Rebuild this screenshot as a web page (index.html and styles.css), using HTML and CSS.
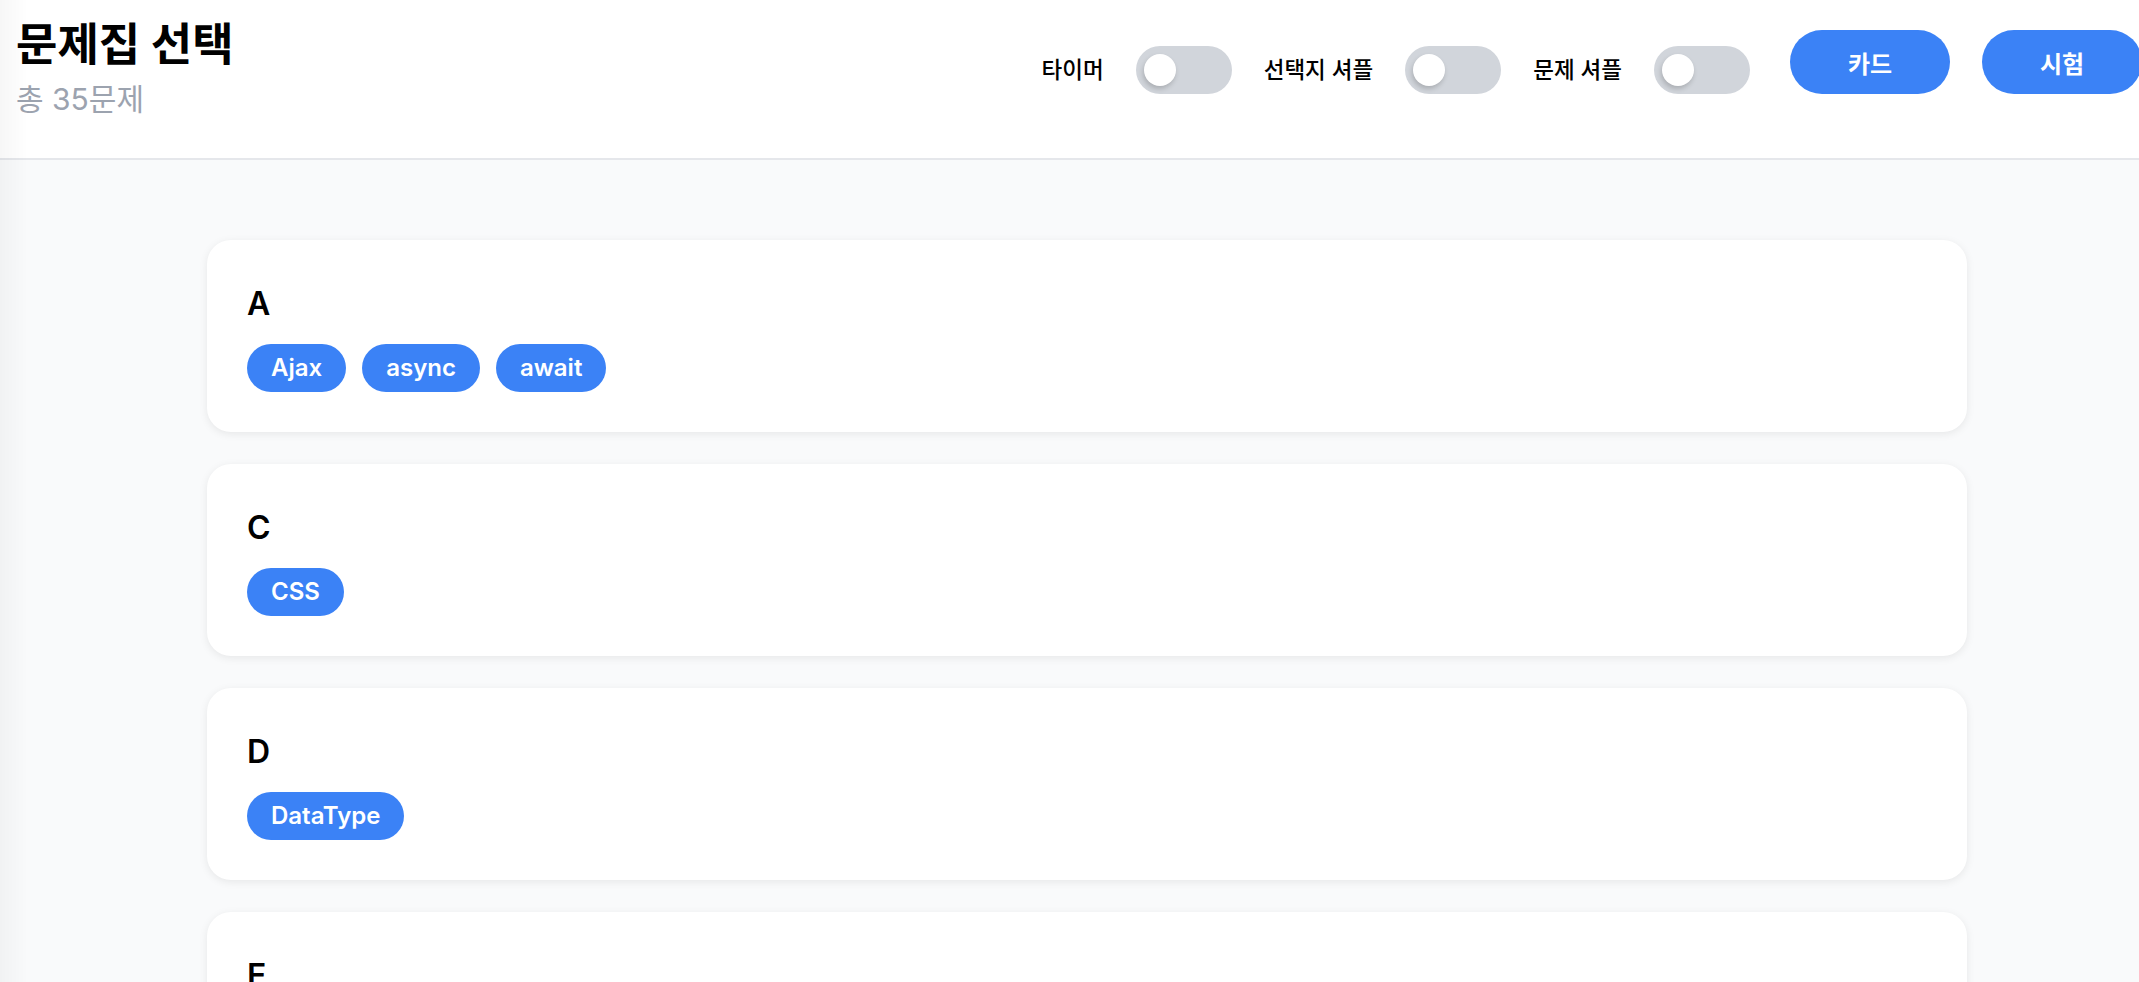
FILE: index.html
```html
<!DOCTYPE html>
<html lang="ko">
<head>
<meta charset="utf-8">
<title>문제집 선택</title>
<link rel="stylesheet" href="styles.css">
</head>
<body>
<div class="page">
  <header class="topbar">
    <div class="title-block">
      <h1 class="title">문제집 선택</h1>
      <p class="subtitle">총 35문제</p>
    </div>
    <div class="controls">
      <div class="toggle-group">
        <span class="toggle-label">타이머</span>
        <span class="toggle"><span class="knob"></span></span>
      </div>
      <div class="toggle-group">
        <span class="toggle-label">선택지 셔플</span>
        <span class="toggle"><span class="knob"></span></span>
      </div>
      <div class="toggle-group">
        <span class="toggle-label">문제 셔플</span>
        <span class="toggle"><span class="knob"></span></span>
      </div>
      <div class="buttons">
        <button class="btn">카드</button>
        <button class="btn">시험</button>
      </div>
    </div>
  </header>
  <main class="main">
    <section class="card">
      <h2 class="card-title">A</h2>
      <div class="chips">
        <span class="chip">Ajax</span>
        <span class="chip">async</span>
        <span class="chip">await</span>
      </div>
    </section>
    <section class="card">
      <h2 class="card-title">C</h2>
      <div class="chips">
        <span class="chip">CSS</span>
      </div>
    </section>
    <section class="card">
      <h2 class="card-title">D</h2>
      <div class="chips">
        <span class="chip">DataType</span>
      </div>
    </section>
    <section class="card">
      <h2 class="card-title">E</h2>
      <div class="chips">
        <span class="chip">Event</span>
      </div>
    </section>
  </main>
</div>
</body>
</html>
```
FILE: styles.css
```css
html {
  overflow: hidden;
}
body {
  margin: 0;
  background: #f9fafb;
  font-family: Inter, "Noto Sans CJK KR", sans-serif;
  color: #000;
}
body::before {
  content: "";
  position: fixed;
  left: 0;
  top: 0;
  bottom: 0;
  width: 28px;
  background: linear-gradient(to right, rgba(0, 0, 0, 0.03), rgba(0, 0, 0, 0));
  pointer-events: none;
  z-index: 5;
}
.page {
  width: 2174px;
}
.topbar {
  box-sizing: border-box;
  height: 160px;
  background: #fff;
  border-bottom: 2px solid #e5e7eb;
  display: flex;
  justify-content: space-between;
  align-items: flex-start;
  padding: 15px 32px 0 16px;
}
.title {
  margin: 0;
  font-size: 45px;
  line-height: 60px;
  font-weight: 700;
}
.subtitle {
  margin: 3px 0 0;
  font-size: 30px;
  line-height: 42px;
  color: #9ca3af;
}
.controls {
  display: flex;
  align-items: flex-end;
  gap: 32px;
  margin-top: 15px;
}
.toggle-group {
  display: flex;
  align-items: center;
  gap: 32px;
  height: 48px;
}
.toggle-label {
  font-size: 22.5px;
  font-weight: 500;
  line-height: 34px;
}
.toggle {
  box-sizing: border-box;
  width: 96px;
  height: 48px;
  border-radius: 24px;
  background: #d1d5db;
  display: flex;
  align-items: center;
  padding-left: 8px;
}
.knob {
  width: 32px;
  height: 32px;
  border-radius: 50%;
  background: #fff;
  box-shadow: -1px 3px 5px rgba(0, 0, 0, 0.18);
}
.buttons {
  display: flex;
  gap: 32px;
  margin-left: 8px;
}
.btn {
  width: 160px;
  height: 64px;
  border: none;
  border-radius: 32px;
  background: #3b82f6;
  color: #fff;
  font-family: Inter, "Noto Sans CJK KR", sans-serif;
  font-size: 24px;
  font-weight: 700;
}
.main {
  display: flex;
  flex-direction: column;
  align-items: center;
  gap: 32px;
  padding-top: 80px;
}
.card {
  box-sizing: border-box;
  width: 1760px;
  background: #fff;
  border-radius: 24px;
  padding: 40px;
  box-shadow: 0 2px 8px rgba(0, 0, 0, 0.08);
}
.card-title {
  margin: 0 0 16px;
  font-size: 32px;
  line-height: 48px;
  font-weight: 600;
}
.chips {
  display: flex;
  gap: 16px;
}
.chip {
  height: 48px;
  padding: 0 24px;
  border-radius: 24px;
  background: #3b82f6;
  color: #fff;
  font-size: 24px;
  font-weight: 600;
  line-height: 48px;
}
```
